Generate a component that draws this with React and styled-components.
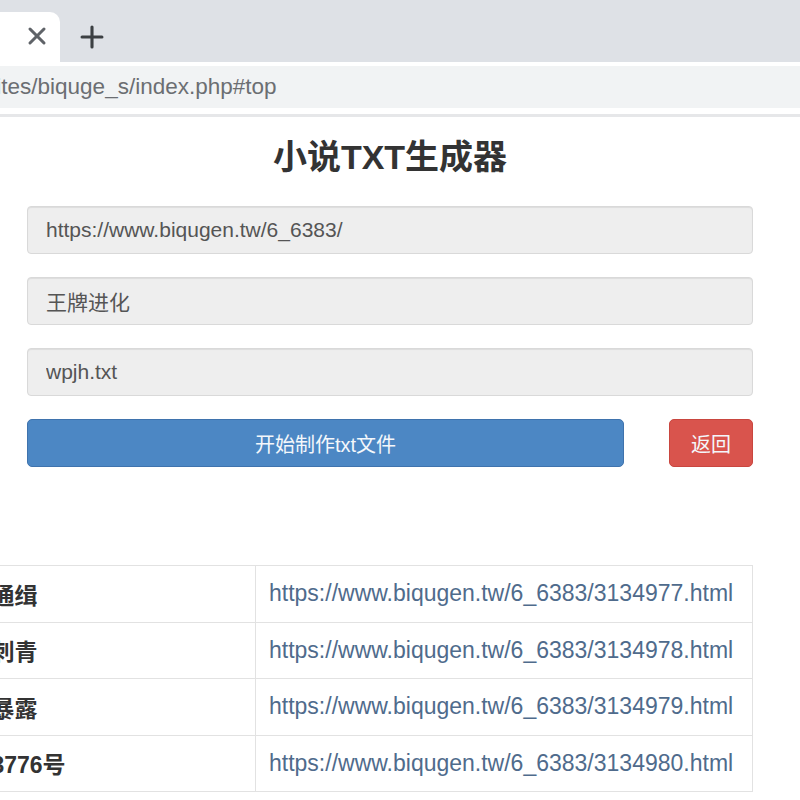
import React from 'react'
import styled, { createGlobalStyle } from 'styled-components'
import { X, Plus } from 'lucide-react'

const GlobalStyle = createGlobalStyle`
  html, body {
    margin: 0;
    padding: 0;
    background: #ffffff;
    overflow: hidden;
  }
  body {
    font-family: "Liberation Sans", "Noto Sans CJK SC", sans-serif;
    color: #333;
  }
`

const chapters = [
  { title: '第一章 通缉', url: 'https://www.biqugen.tw/6_6383/3134977.html' },
  { title: '第二章 刺青', url: 'https://www.biqugen.tw/6_6383/3134978.html' },
  { title: '第三章 暴露', url: 'https://www.biqugen.tw/6_6383/3134979.html' },
  { title: '第四章 3776号', url: 'https://www.biqugen.tw/6_6383/3134980.html' },
]

const App = () => {
  return (
    <>
      <GlobalStyle />
      <TabStrip>
        <Tab>
          <TabClose><X size={28} strokeWidth={2.6} /></TabClose>
        </Tab>
        <NewTab><Plus size={34} strokeWidth={2.2} /></NewTab>
      </TabStrip>
      <Toolbar>
        <AddressField>localhost/sites/biquge_s/index.php#top</AddressField>
      </Toolbar>
      <Page>
        <Container>
          <Title>小说TXT生成器</Title>
          <Form>
            <Field readOnly value="https://www.biqugen.tw/6_6383/" />
            <Field readOnly value="王牌进化" />
            <Field readOnly value="wpjh.txt" />
            <ButtonRow>
              <Button variant="primary">开始制作txt文件</Button>
              <Button variant="danger">返回</Button>
            </ButtonRow>
          </Form>
        </Container>
        <ChapterTable>
          <tbody>
            {chapters.map(c => (
              <tr key={c.url}>
                <NameCell>{c.title}</NameCell>
                <LinkCell><a href="#top">{c.url}</a></LinkCell>
              </tr>
            ))}
          </tbody>
        </ChapterTable>
      </Page>
    </>
  )
}

const TabStrip = styled.div`
  height: 62px;
  background: #dee1e6;
  display: flex;
  align-items: flex-end;
`

const Tab = styled.div`
  width: 60px;
  height: 50px;
  background: #ffffff;
  border-radius: 0 10px 0 0;
  display: flex;
  align-items: center;
  justify-content: flex-end;
  padding: 0 9px 0 0;
  box-sizing: border-box;
`

const TabClose = styled.span`
  display: flex;
  color: #5f6368;
  margin-top: -3px;
`

const NewTab = styled.span`
  display: flex;
  color: #3c4043;
  margin-left: 15px;
  align-self: center;
  margin-top: 12px;
`

const Toolbar = styled.div`
  height: 55px;
  background: #ffffff;
  padding-top: 4px;
  box-sizing: border-box;
  border-bottom: 3px solid #e6e7e9;
  overflow: hidden;
`

const AddressField = styled.div`
  height: 42px;
  margin: 0 -60px 0 -110px;
  background: #f1f3f4;
  border-radius: 21px;
  display: flex;
  align-items: center;
  font-size: 22.5px;
  color: #6b6e72;
  white-space: nowrap;
`

const Page = styled.div`
  background: #ffffff;
  overflow: hidden;
  padding-bottom: 40px;
`

const Container = styled.div`
  width: 726px;
  margin-left: 27px;
`

const Title = styled.h3`
  margin: 22px 0 30px;
  text-align: center;
  font-size: 34px;
  line-height: 37px;
  font-weight: 700;
  color: #333;
`

const Form = styled.div`
  display: flex;
  flex-direction: column;
  gap: 23px;
`

const Field = styled.input`
  height: 48px;
  box-sizing: border-box;
  width: 100%;
  padding: 0 18px;
  background: #eeeeee;
  border: 1px solid #d9d9d9;
  border-radius: 4px;
  box-shadow: inset 0 1px 1px rgba(0, 0, 0, 0.075);
  font-family: "Liberation Sans", "Noto Sans CJK SC", sans-serif;
  font-size: 21px;
  color: #555;
  outline: none;
`

const ButtonRow = styled.div`
  display: flex;
  justify-content: space-between;
`

const Button = styled.button`
  height: 48px;
  width: ${p => (p.variant === 'primary' ? '597px' : '84px')};
  border-radius: 5px;
  border: 1px solid ${p => (p.variant === 'primary' ? '#3f73ad' : '#c9463f')};
  background: ${p => (p.variant === 'primary' ? '#4c87c4' : '#d9544d')};
  color: #f4f7fb;
  font-family: "Liberation Sans", "Noto Sans CJK SC", sans-serif;
  font-size: 20px;
  cursor: pointer;
`

const ChapterTable = styled.table`
  margin: 98px 0 0 -98px;
  width: 851px;
  border-collapse: collapse;
  table-layout: fixed;
  font-size: 23px;
  td {
    border: 1px solid #e2e2e2;
    height: 56.5px;
    padding: 0 13px;
    box-sizing: border-box;
    white-space: nowrap;
    overflow: hidden;
  }
`

const NameCell = styled.td`
  width: 353px;
  font-weight: 700;
  color: #333;
`

const LinkCell = styled.td`
  a {
    color: #4f6b8c;
    text-decoration: none;
  }
`

export default App
